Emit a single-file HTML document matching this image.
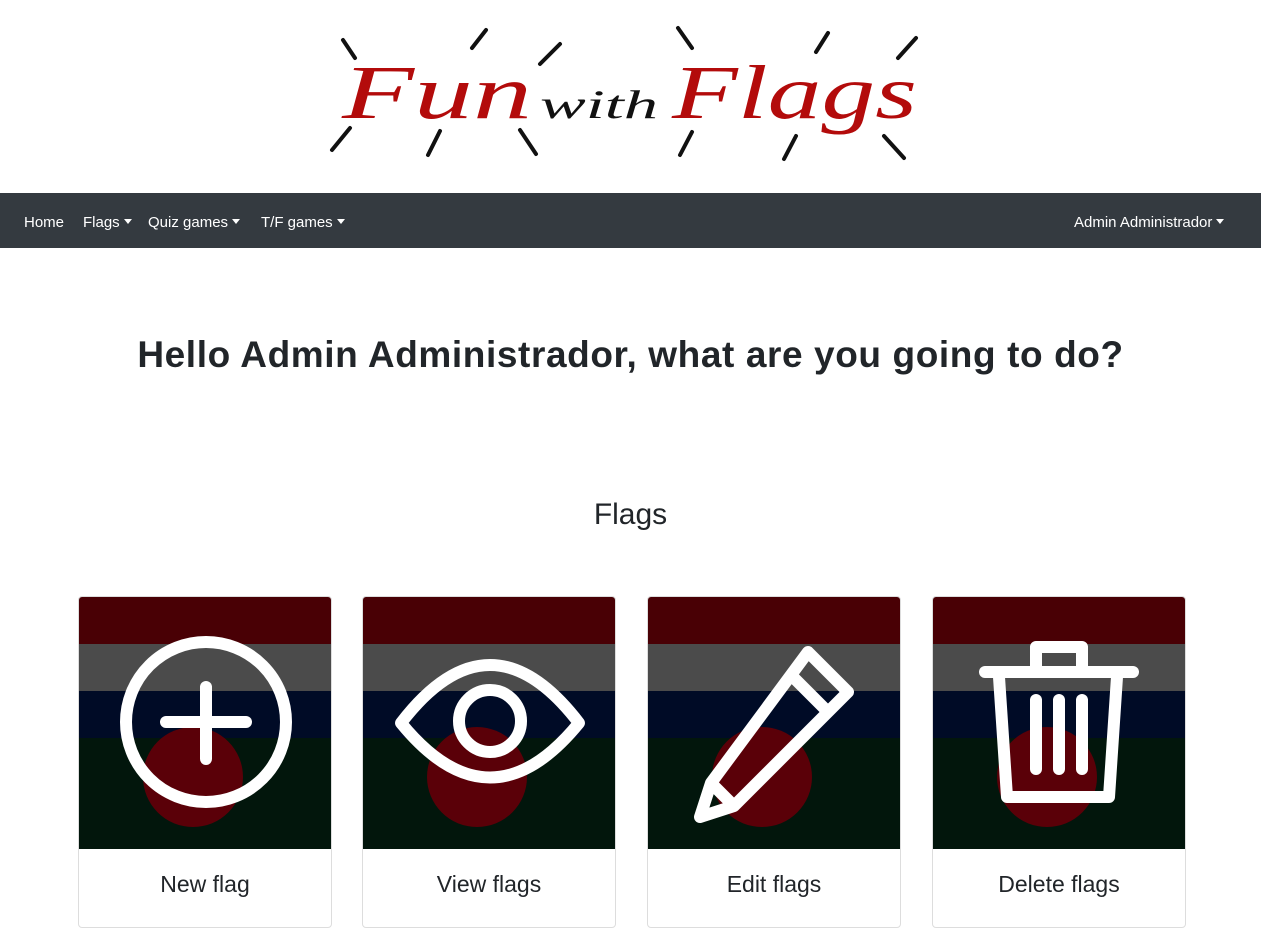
<!DOCTYPE html>
<html><head><style>
body{margin:0;background:#fff;font-family:"Liberation Sans",sans-serif;width:1261px;height:910px;overflow:hidden;position:relative}
.nav{position:absolute;top:193px;left:0;width:1261px;height:55px;background:#343a40;color:#fff;font-size:15px}
.nav span{position:absolute;top:21px}
.car::after{content:"";display:inline-block;margin-left:4px;vertical-align:3px;border-top:5px solid #fff;border-left:4px solid transparent;border-right:4px solid transparent}
h1{position:absolute;top:334px;left:0;width:1261px;text-align:center;margin:0;font-size:37px;font-weight:600;color:#212529;letter-spacing:0.6px}
h2{position:absolute;top:498px;left:0;width:1261px;text-align:center;margin:0;font-size:30px;font-weight:500;color:#212529}
.card{position:absolute;top:596px;width:252px;height:330px;border:1px solid #ddd;border-radius:4px;overflow:hidden}
.card svg{display:block}
.card .t{position:absolute;top:274px;width:100%;text-align:center;font-size:23px;color:#212529}
</style></head><body>
<svg width="1261" height="190" style="position:absolute;top:0;left:0">
<g stroke="#111" stroke-width="4" stroke-linecap="round">
<line x1="343" y1="40" x2="355" y2="58"/><line x1="472" y1="48" x2="486" y2="30"/><line x1="540" y1="64" x2="560" y2="44"/>
<line x1="332" y1="150" x2="350" y2="128"/><line x1="428" y1="155" x2="440" y2="131"/><line x1="520" y1="130" x2="536" y2="154"/>
<line x1="678" y1="28" x2="692" y2="48"/><line x1="816" y1="52" x2="828" y2="33"/><line x1="898" y1="58" x2="916" y2="38"/>
<line x1="680" y1="155" x2="692" y2="132"/><line x1="784" y1="159" x2="796" y2="136"/><line x1="884" y1="136" x2="904" y2="158"/>
</g>
<text x="342" y="118" font-family="Liberation Serif" font-style="italic" font-size="76" fill="#b30b0b" textLength="190" lengthAdjust="spacingAndGlyphs">Fun</text>
<text x="540" y="118" font-family="Liberation Serif" font-style="italic" font-size="40" fill="#111" textLength="118" lengthAdjust="spacingAndGlyphs">with</text>
<text x="672" y="118" font-family="Liberation Serif" font-style="italic" font-size="76" fill="#b30b0b" textLength="245" lengthAdjust="spacingAndGlyphs">Flags</text>
</svg>
<div class="nav">
<span style="left:24px">Home</span>
<span class="car" style="left:83px">Flags</span>
<span class="car" style="left:148px">Quiz games</span>
<span class="car" style="left:261px">T/F games</span>
<span class="car" style="left:1074px">Admin Administrador</span>
</div>
<h1>Hello Admin Administrador, what are you going to do?</h1>
<h2>Flags</h2>

<div class="card" style="left:78px">
<svg width="252" height="252"><rect width="252" height="47" fill="#490005"/><rect y="47" width="252" height="47" fill="#4b4b4b"/><rect y="94" width="252" height="47" fill="#000b26"/><rect y="141" width="252" height="111" fill="#02160c"/><circle cx="114" cy="180" r="50" fill="#5a0008"/>
<g stroke="#fff" stroke-width="12" fill="none" stroke-linecap="round"><circle cx="127" cy="125" r="80"/><line x1="87" y1="125" x2="167" y2="125"/><line x1="127" y1="90" x2="127" y2="162"/></g></svg>
<div class="t">New flag</div></div>

<div class="card" style="left:362px">
<svg width="252" height="252"><rect width="252" height="47" fill="#490005"/><rect y="47" width="252" height="47" fill="#4b4b4b"/><rect y="94" width="252" height="47" fill="#000b26"/><rect y="141" width="252" height="111" fill="#02160c"/><circle cx="114" cy="180" r="50" fill="#5a0008"/>
<g stroke="#fff" stroke-width="12" fill="none" stroke-linejoin="round"><path d="M38 126 Q127 10 216 126 Q127 235 38 126Z"/><circle cx="127" cy="124" r="31"/></g></svg>
<div class="t">View flags</div></div>

<div class="card" style="left:647px">
<svg width="252" height="252"><rect width="252" height="47" fill="#490005"/><rect y="47" width="252" height="47" fill="#4b4b4b"/><rect y="94" width="252" height="47" fill="#000b26"/><rect y="141" width="252" height="111" fill="#02160c"/><circle cx="114" cy="180" r="50" fill="#5a0008"/>
<g stroke="#fff" stroke-width="12" fill="none" stroke-linejoin="round"><path d="M160 55 L200 95 L86 209 L52 220 L63 186 Z"/><line x1="140" y1="75" x2="180" y2="115"/><line x1="63" y1="186" x2="86" y2="209"/></g></svg>
<div class="t">Edit flags</div></div>

<div class="card" style="left:932px">
<svg width="252" height="252"><rect width="252" height="47" fill="#490005"/><rect y="47" width="252" height="47" fill="#4b4b4b"/><rect y="94" width="252" height="47" fill="#000b26"/><rect y="141" width="252" height="111" fill="#02160c"/><circle cx="114" cy="180" r="50" fill="#5a0008"/>
<g stroke="#fff" stroke-width="12" fill="none" stroke-linejoin="round" stroke-linecap="round"><line x1="52" y1="75" x2="200" y2="75"/><path d="M103 73 V50 H149 V73"/><path d="M66 80 L74 200 H176 L184 80"/><line x1="103" y1="103" x2="103" y2="172"/><line x1="126" y1="103" x2="126" y2="172"/><line x1="149" y1="103" x2="149" y2="172"/></g></svg>
<div class="t">Delete flags</div></div>
</body></html>
